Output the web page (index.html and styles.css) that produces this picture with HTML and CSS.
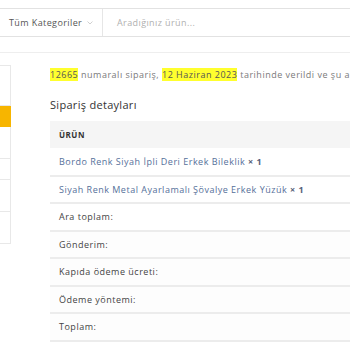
FILE: index.html
```html
<!DOCTYPE html>
<html lang="tr">
<head>
    <meta charset="UTF-8">
    <meta name="viewport" content="width=device-width, initial-scale=1.0">
    <title>Sipariş</title>
    <link rel="stylesheet" href="styles.css">
</head>
<body>
    <!-- Search -->
    <div class="search-bar">
        <div class="category-select">
            <span>Tüm Kategoriler</span>
            <svg class="chevron" width="6" height="4" viewBox="0 0 6 4"><path d="M0.5 0.5 L3 3 L5.5 0.5" fill="none" stroke="#c4c4c4" stroke-width="0.8"/></svg>
        </div>
        <div class="search-input">Aradığınız ürün...</div>
    </div>

    <div class="page-divider"></div>

    <div class="account">
        <!-- Account menu -->
        <ul class="account-nav">
            <li class="nav-item tall"></li>
            <li class="nav-item active"></li>
            <li class="nav-item mid"></li>
            <li class="nav-item short"></li>
            <li class="nav-item mid"></li>
            <li class="nav-item mid"></li>
        </ul>

        <!-- Order details -->
        <div class="account-content">
            <p class="order-info"><mark>12665</mark> numaralı sipariş, <mark>12 Haziran 2023</mark> tarihinde verildi ve şu anda</p>

            <h2 class="details-title">Sipariş detayları</h2>

            <table class="order-table">
                <thead>
                    <tr><th>Ürün</th></tr>
                </thead>
                <tbody>
                    <tr><td class="product">Bordo Renk Siyah İpli Deri Erkek Bileklik <strong>× 1</strong></td></tr>
                    <tr><td class="product">Siyah Renk Metal Ayarlamalı Şövalye Erkek Yüzük <strong>× 1</strong></td></tr>
                    <tr><td>Ara toplam:</td></tr>
                </tbody>
                <tfoot>
                    <tr><td>Gönderim:</td></tr>
                    <tr><td>Kapıda ödeme ücreti:</td></tr>
                    <tr><td>Ödeme yöntemi:</td></tr>
                    <tr><td>Toplam:</td></tr>
                </tfoot>
            </table>
        </div>
    </div>
</body>
</html>
```

FILE: styles.css
```css
* {
    margin: 0;
    padding: 0;
    box-sizing: border-box;
}

body {
    background-color: #ffffff;
    color: #333333;
    font-family: "Open Sans", "Noto Sans", sans-serif;
    overflow: hidden;
    width: 350px;
    height: 350px;
}

/* Search bar */
.search-bar {
    display: flex;
    margin-top: 8px;
    height: 29px;
    border-top: 1px solid #e2e2e2;
    border-bottom: 1px solid #e2e2e2;
}

.category-select {
    width: 103px;
    display: flex;
    align-items: center;
    padding-left: 9px;
    border-right: 1px solid #e6e6e6;
    font-size: 9px;
    letter-spacing: 0.4px;
    color: #555;
}

.chevron {
    margin-left: 5px;
}

.search-input {
    display: flex;
    align-items: center;
    padding-left: 14px;
    font-size: 9px;
    letter-spacing: 0.4px;
    color: #b0b0b0;
}

.page-divider {
    margin-top: 15px;
    border-top: 1px solid #eeeeee;
}

/* Account layout */
.account {
    display: flex;
    width: 420px;
}

.account-nav {
    list-style: none;
    width: 11px;
    margin-top: 12px;
    flex-shrink: 0;
}

.nav-item {
    border: 1px solid #e8e8e8;
    border-left: none;
    border-top: none;
    height: 32px;
}

.nav-item:first-child {
    border-top: 1px solid #e8e8e8;
}

.nav-item.tall {
    height: 41px;
}

.nav-item.active {
    height: 21px;
    background-color: #f7b500;
    border-color: #f7b500;
}

.nav-item.mid {
    height: 32px;
}

.nav-item.short {
    height: 21px;
}

.account-content {
    margin-left: 39px;
    flex-grow: 1;
}

.order-info {
    margin-top: 15px;
    font-size: 9px;
    letter-spacing: 0.5px;
    color: #7a7a7a;
    white-space: nowrap;
}

.order-info mark {
    background-color: #ffff2e;
    color: #555;
}

.details-title {
    margin-top: 16px;
    font-size: 11px;
    letter-spacing: 0.3px;
    font-weight: 400;
    color: #333;
}

/* Table */
.order-table {
    margin-top: 9px;
    width: 100%;
    border-collapse: collapse;
    font-size: 9px;
    letter-spacing: 0.5px;
}

.order-table th {
    background-color: #f5f5f5;
    text-align: left;
    text-transform: uppercase;
    font-weight: 700;
    font-size: 8px;
    color: #333;
    height: 27px;
    padding-left: 9px;
}

.order-table td {
    height: 27.5px;
    padding-left: 9px;
    border-bottom: 2px solid #ececec;
    color: #444;
}

.order-table td.product {
    color: #55709a;
}

.order-table td strong {
    color: #55607a;
}

.order-table tfoot td {
    background-color: #fdfdfd;
}
```
